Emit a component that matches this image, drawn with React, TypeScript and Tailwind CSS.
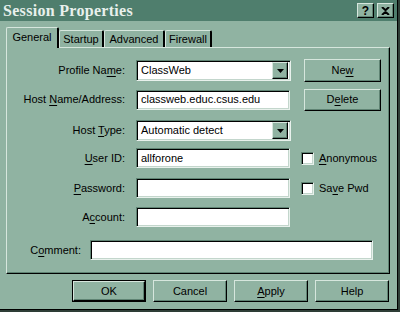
import React from 'react';

const raised =
  'border border-t-[#d6e6dd] border-l-[#d6e6dd] border-r-black border-b-black shadow-[inset_-1px_-1px_0_#5f8373]';
const sunken =
  'border border-t-[#5f8373] border-l-[#5f8373] border-r-[#e8f1ec] border-b-[#e8f1ec] shadow-[inset_1px_1px_0_#000,inset_-1px_-1px_0_#c3d6cc] bg-white';

const U = ({ children }: { children: React.ReactNode }) => (
  <span className="underline underline-offset-[2px] decoration-1">{children}</span>
);

const Field = ({ text, w = 'w-[155px]' }: { text?: string; w?: string }) => (
  <div className={`${sunken} ${w} h-[20px] flex items-center pl-[4px]`}>{text}</div>
);

const Select = ({ text }: { text: string }) => (
  <div className={`${sunken} w-[155px] h-[21px] flex items-center pl-[4px] pr-[2px]`}>
    <span className="flex-1">{text}</span>
    <div className={`${raised} w-[16px] h-[17px] bg-[#90b3a2] flex items-center justify-center`}>
      <svg width="7" height="4" viewBox="0 0 7 4">
        <path d="M0 0h7L3.5 4z" fill="#000" />
      </svg>
    </div>
  </div>
);

const Btn = ({ children, h = 'h-[22px]', w = 'w-[74px]' }: { children: React.ReactNode; h?: string; w?: string }) => (
  <div className={`${h} ${w} flex items-center justify-center ${raised}`}>{children}</div>
);

// default button: black frame around a raised face
const DefBtn = ({ children }: { children: React.ReactNode }) => (
  <div className="h-[22px] w-[74px] border border-black flex">
    <div className={`flex-1 flex items-center justify-center ${raised}`}>{children}</div>
  </div>
);

const Check = ({ children }: { children: React.ReactNode }) => (
  <div className="flex items-center ml-[11px]">
    <div className={`${sunken} w-[13px] h-[13px]`} />
    <span className="ml-[5px]">{children}</span>
  </div>
);

const Tab = ({ label, active, w }: { label: string; active?: boolean; w: string }) => (
  <div
    className={`${w} flex items-center justify-center rounded-t-[2px] border-t border-l border-t-[#d6e6dd] border-l-[#d6e6dd] border-r-2 border-r-black ${
      active ? 'h-[21px] -mb-px relative z-10 bg-[#90b3a2] pb-[2px]' : 'h-[17px] pt-[1px]'
    }`}
  >
    {label}
  </div>
);

export default function App() {
  return (
    <div className="w-[400px] h-[312px] bg-[#2e3d36] font-['Liberation_Sans',Arial,sans-serif] text-[11px] text-black">
      <div className="w-[398px] h-[310px] bg-[#90b3a2] border-r-[1px] border-b-[1px] border-r-black border-b-black">
        <div className="h-[21px] bg-[#4f7e6d] flex items-center justify-between pl-[3px] pr-[3px]">
          <span className="font-['Liberation_Serif',serif] font-bold text-[16px] text-[#e8f0ec] tracking-[0.3px]">
            Session Properties
          </span>
          <div className="flex gap-[3px]">
            <div className={`${raised} bg-[#90b3a2] w-[17px] h-[15px] flex items-center justify-center font-bold text-[12px]`}>?</div>
            <div className={`${raised} bg-[#90b3a2] w-[17px] h-[15px] flex items-center justify-center`}>
              <svg width="9" height="8" viewBox="0 0 9 8">
                <path d="M1 0l3.5 3.2L8 0M1 8l3.5-3.2L8 8" stroke="#000" strokeWidth="2" fill="none" />
              </svg>
            </div>
          </div>
        </div>

        <div className="pl-[6px] pt-[5px]">
          <div className="flex items-end h-[21px]">
            <Tab label="General" active w="w-[53px]" />
            <Tab label="Startup" w="w-[45px]" />
            <Tab label="Advanced" w="w-[61px]" />
            <Tab label="Firewall" w="w-[47px]" />
          </div>

          <div className="w-[384px] h-[227px] border-t border-l border-t-[#d6e6dd] border-l-[#d6e6dd] border-r border-b border-r-black border-b-black shadow-[inset_-1px_-1px_0_#5f8373] flex flex-col">
            <div className="flex items-center h-[21px] mt-[12px]">
              <div className="w-[118px] text-right">
                Profile Na<U>m</U>e:
              </div>
              <div className="ml-[11px]">
                <Select text="ClassWeb" />
              </div>
              <div className="ml-[13px]">
                <Btn h="h-[23px]" w="w-[77px]">
                  <span>Ne<U>w</U></span>
                </Btn>
              </div>
            </div>

            <div className="flex items-center h-[21px] mt-[8px]">
              <div className="w-[118px] text-right">
                Host <U>N</U>ame/Address:
              </div>
              <div className="ml-[11px]">
                <Field text="classweb.educ.csus.edu" w="w-[154px]" />
              </div>
              <div className="ml-[14px]">
                <Btn w="w-[77px]">
                  <span>D<U>e</U>lete</span>
                </Btn>
              </div>
            </div>

            <div className="flex items-center h-[21px] mt-[10px]">
              <div className="w-[118px] text-right">
                Host <U>T</U>ype:
              </div>
              <div className="ml-[11px]">
                <Select text="Automatic detect" />
              </div>
            </div>

            <div className="flex items-center h-[20px] mt-[7px]">
              <div className="w-[118px] text-right">
                <U>U</U>ser ID:
              </div>
              <div className="ml-[11px]">
                <Field text="allforone" w="w-[154px]" />
              </div>
              <Check>
                <U>A</U>nonymous
              </Check>
            </div>

            <div className="flex items-center h-[20px] mt-[10px]">
              <div className="w-[118px] text-right">
                <U>P</U>assword:
              </div>
              <div className="ml-[11px]">
                <Field w="w-[154px]" />
              </div>
              <Check>
                Sa<U>v</U>e Pwd
              </Check>
            </div>

            <div className="flex items-center h-[20px] mt-[9px]">
              <div className="w-[118px] text-right">
                A<U>c</U>count:
              </div>
              <div className="ml-[11px]">
                <Field w="w-[154px]" />
              </div>
            </div>

            <div className="flex items-center h-[20px] mt-[13px]">
              <div className="w-[74px] text-right">
                C<U>o</U>mment:
              </div>
              <div className="ml-[9px]">
                <Field w="w-[283px]" />
              </div>
            </div>
          </div>

          <div className="flex justify-end gap-[7px] w-[383px] mt-[6px]">
            <DefBtn>OK</DefBtn>
            <Btn>Cancel</Btn>
            <Btn>
              <span><U>A</U>pply</span>
            </Btn>
            <Btn>Help</Btn>
          </div>
        </div>
      </div>
    </div>
  );
}
